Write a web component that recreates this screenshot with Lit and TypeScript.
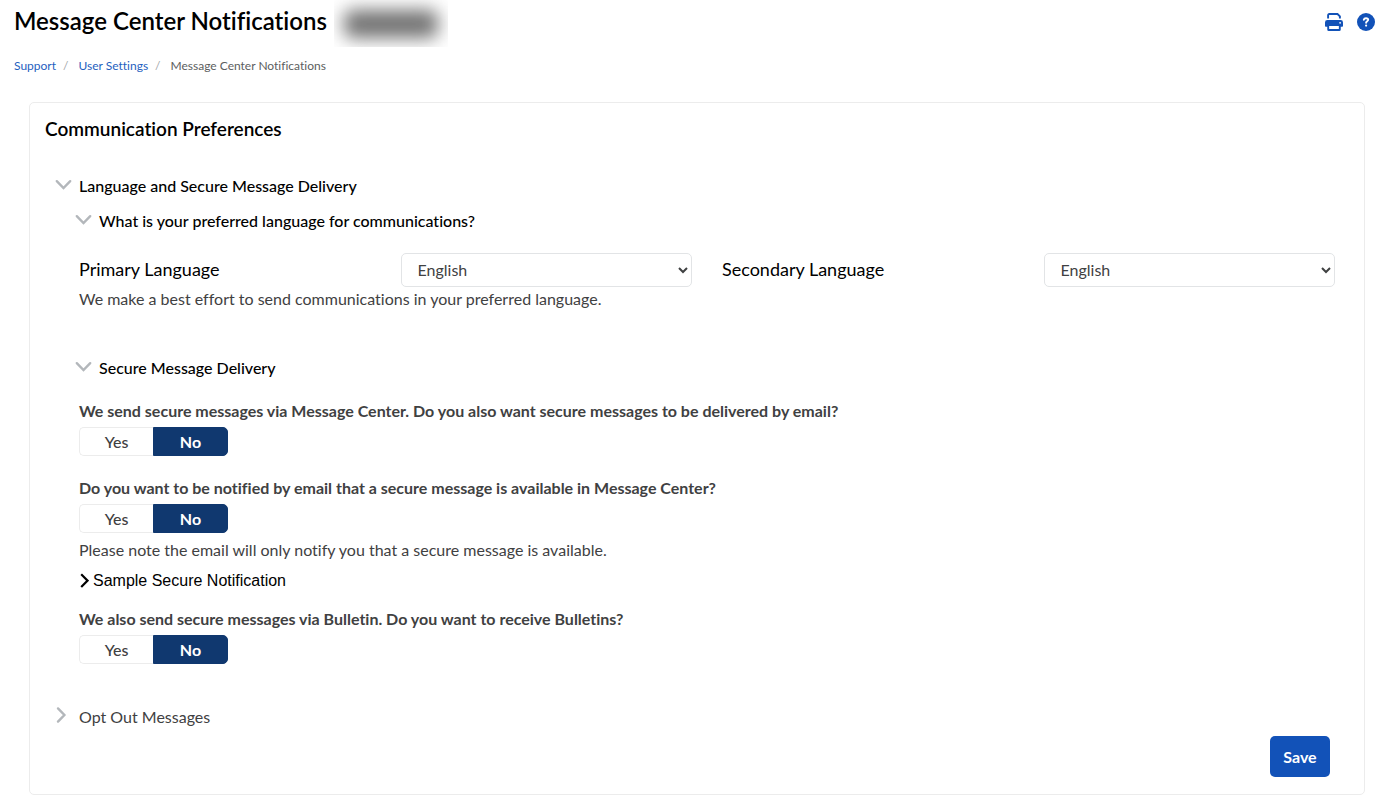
import { LitElement, html, css, svg } from "lit";
import { customElement, property, state } from "lit/decorators.js";
import { classMap } from "lit/directives/class-map.js";

@customElement("yes-no-question")
class YesNoQuestion extends LitElement {
  @property() question = "";
  @property() name = "";
  @property() value = "No";

  static styles = css`
    :host {
      display: block;
    }
    .question {
      margin: 0 0 4px;
      font-size: 16px;
      line-height: 24px;
      font-weight: 700;
      color: #3f4142;
    }
    .group {
      display: grid;
      justify-content: start;
      grid-template-columns: 74px 75px;
      height: 29px;
    }
    .option {
      display: flex;
      align-items: center;
      justify-content: center;
      border: 1px solid #ececec;
      box-sizing: border-box;
      font-size: 16px;
      line-height: 20px;
      font-weight: 500;
      color: #3f4142;
      cursor: pointer;
    }
    .option:first-child {
      border-radius: 5px 0 0 5px;
      border-right: 0;
    }
    .option:last-child {
      border-radius: 0 5px 5px 0;
    }
    .option.selected {
      background: #10386f;
      border-color: #10386f;
      color: #fff;
      font-weight: 700;
    }
    .option:focus-within {
      outline: 2px solid #1252b8;
    }
    .radio {
      appearance: none;
      width: 0;
      height: 0;
      margin: 0;
      outline: none;
    }
  `;

  render() {
    return html`
      <p class="question" id="question">${this.question}</p>
      <div class="group" role="radiogroup" aria-labelledby="question">
        ${["Yes", "No"].map(
          (option) => html`
            <label class=${classMap({ option: true, selected: option === this.value })}>
              <input
                class="radio"
                type="radio"
                name=${this.name}
                .checked=${option === this.value}
                @change=${() => (this.value = option)}
              />${option}
            </label>
          `
        )}
      </div>
    `;
  }
}

@customElement("app-root")
class AppRoot extends LitElement {
  @state() private open: Record<string, boolean> = {
    delivery: true,
    language: true,
    secure: true,
    sample: false,
    optOut: false,
  };

  static styles = css`
    :host {
      display: block;
      font-family: Lato, "Open Sans", sans-serif;
      font-size: 16px;
      line-height: 24px;
      font-variant-ligatures: none;
      color: #3f4142;
      background: #fff;
    }
    .header {
      display: flex;
      align-items: center;
      padding-left: 14px;
      padding-right: 5px;
      height: 47px;
    }
    .title {
      margin: 0 7px 6px 0;
      font-size: 24px;
      line-height: 28px;
      font-weight: 600;
      color: #000;
    }
    .redacted {
      display: flex;
      align-items: center;
      justify-content: center;
      width: 114px;
      height: 47px;
      overflow: hidden;
    }
    .redacted-text {
      width: 94px;
      height: 28px;
      border-radius: 8px;
      background: #727272;
      filter: blur(9px);
    }
    .tools {
      display: flex;
      gap: 14px;
      margin-left: auto;
      margin-bottom: 3px;
    }
    .tool {
      display: flex;
      padding: 0;
      border: 0;
      background: none;
      cursor: pointer;
    }
    .crumbs {
      display: flex;
      margin: 0;
      padding: 9px 14px 0;
      list-style: none;
      font-size: 12px;
      line-height: 20px;
      color: #5c5e60;
    }
    .crumb + .crumb::before {
      content: "/";
      padding: 0 10px 0 7px;
      color: #a3a7aa;
    }
    .crumb-link {
      color: #1f5fc0;
      text-decoration: none;
    }
    .card {
      margin: 26px 15px 15px 29px;
      padding: 13px 29px 17px 15px;
      border: 1px solid #ececec;
      border-radius: 5px;
    }
    .card-title {
      margin: 0;
      font-size: 19px;
      line-height: 26px;
      font-weight: 600;
      color: #000;
    }
    .section {
      padding-left: 34px;
    }
    .toggle {
      display: flex;
      align-items: center;
      gap: 7px;
      margin: 0;
      padding: 0;
      border: 0;
      background: none;
      font: inherit;
      font-weight: 500;
      color: #000;
      cursor: pointer;
    }
    .toggle.outer {
      margin-left: 10px;
    }
    .toggle.inner {
      margin-left: -4px;
    }
    .toggle.sample {
      gap: 4px;
      font-family: "Liberation Sans", Arial, sans-serif;
      font-weight: 400;
    }
    .toggle.muted {
      font-weight: 400;
      color: #3f4142;
    }
    .first {
      margin-top: 32px;
    }
    .language-toggle {
      margin-top: 11px;
    }
    .languages {
      display: grid;
      grid-template-columns: repeat(4, 1fr);
      column-gap: 30px;
      margin-top: 20px;
    }
    .language-label {
      padding-top: 4px;
      font-size: 18px;
      line-height: 24px;
      color: #000;
    }
    .select {
      width: 100%;
      height: 34px;
      padding: 0 4px 1px 12px;
      border: 1px solid #e2e4e6;
      border-radius: 5px;
      background: #fff;
      font: inherit;
      color: #3f4142;
    }
    .note {
      margin: 0;
    }
    .secure-toggle {
      margin-top: 45px;
    }
    .question-row {
      margin-top: 19px;
    }
    .question-row + .question-row {
      margin-top: 20px;
    }
    .delivery-note {
      margin-top: 5px;
    }
    .sample-toggle {
      margin-top: 7px;
    }
    .bulletin-row {
      margin-top: 14px;
    }
    .opt-out {
      margin-top: 41px;
    }
    .actions {
      display: flex;
      justify-content: flex-end;
      margin-top: 7px;
      padding-right: 5px;
    }
    .save {
      min-width: 60px;
      height: 41px;
      padding: 0 12px;
      border: 0;
      border-radius: 5px;
      background: #1252b8;
      font: inherit;
      font-weight: 700;
      color: #fff;
      cursor: pointer;
    }
  `;

  private flip(key: string) {
    this.open = { ...this.open, [key]: !this.open[key] };
  }

  private chevron(open: boolean, dark = false) {
    if (dark) {
      return html`<svg width="10" height="16" viewBox="0 0 10 16" fill="none" stroke="#000" stroke-width="2.2" aria-hidden="true">
        ${open ? svg`<path d="M1 5l4 5 4-5" />` : svg`<path d="M2.200 1.200L8.600 7.600l-6.400 6.400" />`}
      </svg>`;
    }
    return html`<svg width="17" height="17" viewBox="0 0 17 17" fill="none" stroke="#b3b7bb" stroke-width="2.4" stroke-linecap="round" overflow="visible" aria-hidden="true">
      ${open ? svg`<path d="M1.800 3.200l6.700 6.800 6.700-6.800" />` : svg`<path d="M3 -0.600l6.400 6.600-6.400 6.600" />`}
    </svg>`;
  }

  private toggle(key: string, label: string, classes: string, dark = false) {
    return html`<button
      type="button"
      class="toggle ${classes}"
      aria-expanded=${this.open[key] ? "true" : "false"}
      @click=${() => this.flip(key)}
    >
      ${this.chevron(this.open[key], dark)}<span>${label}</span>
    </button>`;
  }

  private languageField(id: string, label: string) {
    return html`
      <label class="language-label" for=${id}>${label}</label>
      <select class="select" id=${id}>
        <option>English</option>
        <option>Spanish</option>
      </select>
    `;
  }

  render() {
    return html`
      <header class="header">
        <h1 class="title">Message Center Notifications</h1>
        <div class="redacted"><div class="redacted-text"></div></div>
        <div class="tools">
          <button class="tool" type="button" aria-label="Print">
            <svg width="18" height="18" viewBox="0 0 18 18" aria-hidden="true">
              <path d="M3.100 5.400V2.200Q3.100 1 4.300 1h8.200l2.400 2.300V5.400" fill="none" stroke="#1252b8" stroke-width="1.900" />
              <path d="M2.400 7h13.200A2.400 2.400 0 0 1 18 9.400V12.900a.8.8 0 0 1-.8.8H.8a.8.8 0 0 1-.8-.8V9.400A2.400 2.400 0 0 1 2.400 7z" fill="#1252b8" />
              <rect x="3.200" y="12" width="11.600" height="5" rx="0.600" fill="#fff" stroke="#1252b8" stroke-width="1.900" />
              <circle cx="15.100" cy="9.800" r="0.900" fill="#fff" />
            </svg>
          </button>
          <button class="tool" type="button" aria-label="Help">
            <svg width="18" height="18" viewBox="0 0 18 18" fill="none" aria-hidden="true">
              <circle cx="9" cy="9" r="9" fill="#1252b8" />
              <path d="M6.800 6.700C7 5.700 7.800 5.200 9 5.200c1.300 0 2.200.600 2.200 1.600C11.200 8.100 9.100 8.300 9.100 9.700" stroke="#fff" stroke-width="1.900" stroke-linecap="round" />
              <circle cx="9.100" cy="12.600" r="1.100" fill="#fff" />
            </svg>
          </button>
        </div>
      </header>

      <nav aria-label="Breadcrumb">
        <ol class="crumbs">
          <li class="crumb"><a class="crumb-link" href="#support">Support</a></li>
          <li class="crumb"><a class="crumb-link" href="#settings">User Settings</a></li>
          <li class="crumb" aria-current="page">Message Center Notifications</li>
        </ol>
      </nav>

      <main class="card">
        <h2 class="card-title">Communication Preferences</h2>
        ${this.toggle("delivery", "Language and Secure Message Delivery", "outer first")}
        ${this.open.delivery
          ? html`<div class="section">
              ${this.toggle("language", "What is your preferred language for communications?", "inner language-toggle")}
              ${this.open.language
                ? html`<div class="languages">
                      ${this.languageField("primary", "Primary Language")}
                      ${this.languageField("secondary", "Secondary Language")}
                    </div>
                    <p class="note">We make a best effort to send communications in your preferred language.</p>`
                : ""}
              ${this.toggle("secure", "Secure Message Delivery", "inner secure-toggle")}
              ${this.open.secure
                ? html`
                    <yes-no-question
                      class="question-row"
                      name="email"
                      question="We send secure messages via Message Center. Do you also want secure messages to be delivered by email?"
                    ></yes-no-question>
                    <yes-no-question
                      class="question-row"
                      name="notify"
                      question="Do you want to be notified by email that a secure message is available in Message Center?"
                    ></yes-no-question>
                    <p class="note delivery-note">Please note the email will only notify you that a secure message is available.</p>
                    ${this.toggle("sample", "Sample Secure Notification", "sample sample-toggle", true)}
                    <yes-no-question
                      class="bulletin-row"
                      name="bulletin"
                      question="We also send secure messages via Bulletin. Do you want to receive Bulletins?"
                    ></yes-no-question>
                  `
                : ""}
            </div>`
          : ""}
        ${this.toggle("optOut", "Opt Out Messages", "outer muted opt-out")}
        <div class="actions"><button class="save" type="button">Save</button></div>
      </main>
    `;
  }
}
